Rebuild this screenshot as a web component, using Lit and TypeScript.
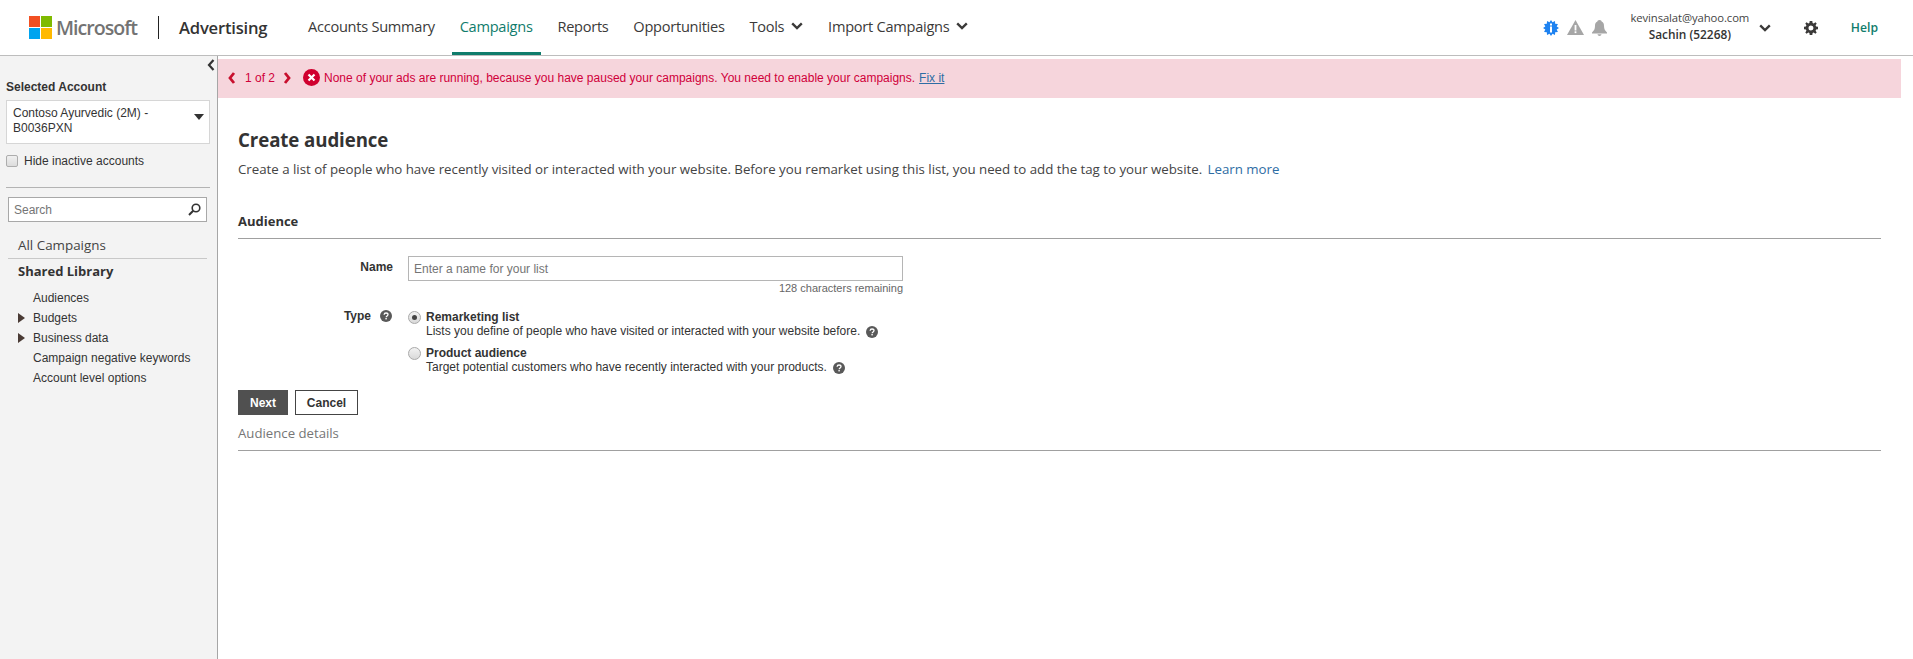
import { LitElement, html, css } from "lit";
import { customElement } from "lit/decorators.js";

const chevDown = html`<svg class="chev" width="12" height="8" viewBox="0 0 12 8"><path d="M1.200 1.400 6 6l4.800-4.600" fill="none" stroke="#3b3a39" stroke-width="2.400"/></svg>`;
const help = html`<svg class="help" width="12" height="12" viewBox="0 0 12 12"><circle cx="6" cy="6" r="6" fill="#595959"/><path d="M4.100 4.700C4.200 3.500 5 3 6 3c1.200 0 2 .7 2 1.600 0 1.400-1.700 1.400-1.800 2.600" fill="none" stroke="#fff" stroke-width="1.300"/><rect x="5.400" y="8" width="1.400" height="1.400" fill="#fff"/></svg>`;
const side = (d: string) => html`<svg width="8" height="12" viewBox="0 0 8 12"><path d="${d}" fill="none" stroke="#c8102e" stroke-width="2.800"/></svg>`;
const burstPath = (() => {
  const pts: string[] = [];
  const n = 12;
  for (let i = 0; i < n * 2; i++) {
    const r = i % 2 ? 5.9 : 8;
    const a = (Math.PI * i) / n;
    pts.push(`${(8 + r * Math.sin(a)).toFixed(2)},${(8 - r * Math.cos(a)).toFixed(2)}`);
  }
  return pts.join(" ");
})();

@customElement("app-root")
export class AppRoot extends LitElement {
  static styles = css`
    :host { display: flex; flex-direction: column; height: 100vh; min-height: 659px; background: #fff; color: #333; font-family: "Liberation Sans", Arial, sans-serif; font-size: 12px; overflow: hidden; }
    header { height: 55px; flex: none; display: flex; align-items: center; border-bottom: 1px solid #bdbdbd; padding-left: 29px; box-sizing: content-box; }
    .logo { display: grid; grid-template-columns: 11px 11px; grid-template-rows: 11px 11px; gap: 1px; flex: none; }
    .ms { font: 600 19.6px "Open Sans", sans-serif; color: #737373; margin-left: 4px; letter-spacing: -1px; width: 82px; }
    .sep { width: 1px; height: 23px; background: #222; margin: 0 20px 0 20px; }
    .adv { font: 600 16.6px "Open Sans", sans-serif; color: #333; width: 90px; letter-spacing: -.2px; }
    nav { display: flex; margin-left: 31px; height: 55px; }
    nav a { font: 400 14.6px "Open Sans", sans-serif; letter-spacing: -.27px; color: #3b3a39; display: flex; align-items: center; gap: 7px; padding: 0 8px 0 8px; margin-right: 8.800px; border-bottom: 3px solid transparent; box-sizing: border-box; height: 55px; }
    nav a.on { color: #107c6c; border-bottom-color: #107c6c; }
    .right { margin-left: auto; display: flex; align-items: center; height: 55px; }
    .icons { display: flex; gap: 8px; align-items: center; margin-right: 22px; }
    .user { width: 122px; text-align: center; font-family: "Open Sans", sans-serif; line-height: 16px; margin-top: -3px; }
    .user .e { font-size: 11.3px; color: #444; letter-spacing: -.1px; }
    .user .n { font-size: 11.9px; font-weight: 600; color: #333; }
    .user-chev { margin: 0 33px 0 8px; display: flex; }
    .gear { margin-right: 33px; display: flex; }
    .helplink { font: 600 12.2px "Open Sans", sans-serif; color: #107c6c; margin-right: 35px; }
    .body { flex: 1; display: flex; min-height: 0; }
    aside { width: 218px; flex: none; background: #f3f3f3; border-right: 1px solid #a6a6a6; box-sizing: border-box; padding: 0 7px 0 6px; position: relative; }
    .collapse { position: absolute; right: 2px; top: 3px; }
    .sa { font-weight: 700; margin-top: 24px; line-height: 14px; font-size: 12px; color: #333; }
    .sel { height: 44px; margin-top: 6px; box-sizing: border-box; background: #fff; border: 1px solid #d6d6d6; padding: 5px 6px; line-height: 15px; position: relative; color: #333; }
    .sel i { position: absolute; right: 5px; top: 13px; width: 0; height: 0; border: 5px solid transparent; border-top: 6px solid #333; border-bottom: 0; }
    .hide { display: flex; align-items: center; gap: 6px; margin-top: 10px; height: 13px; color: #333; }
    .cb { width: 12px; height: 12px; box-sizing: border-box; border: 1px solid #adadad; border-radius: 2px; background: linear-gradient(#f0f0f0, #dcdcdc); }
    .hr { height: 1px; background: #b3b3b3; margin-top: 20px; }
    .search { margin: 9px 3px 0 2px; height: 25px; box-sizing: border-box; background: #fff; border: 1px solid #a8a8a8; display: flex; align-items: center; justify-content: space-between; padding: 0 5px 0 5px; color: #757575; }
    .all { font: 400 13.4px "Open Sans", sans-serif; color: #444; margin: 14px 3px 0 2px; padding: 0 0 3px 10px; border-bottom: 1px solid #c8c8c8; line-height: 19px; }
    .lib { font: 700 13px "Open Sans", sans-serif; margin: 2px 0 0 12px; line-height: 20px; color: #333; }
    .tree { margin: 7px 0 0 12px; }
    .tree div { height: 20px; line-height: 20px; padding-left: 15px; position: relative; color: #333; }
    .tree div.arrow::before { content: ""; position: absolute; left: 0; top: 5px; border: 5px solid transparent; border-left: 7px solid #4a3b35; border-right: 0; }
    main { flex: 1; min-width: 0; padding: 3px 12px 0 0; }
    .banner { height: 39px; background: #f6d5dc; display: flex; align-items: center; color: #d0003a; padding: 0 0 2px 10px; box-sizing: border-box; }
    .banner .pg { margin: 0 8px 0 9px; }
    .banner .err { margin: 0 4px 0 12px; flex: none; }
    .banner a { color: #2e6da4; text-decoration: underline; margin-left: 4px; }
    .content { padding: 0 20px 0 20px; }
    h1 { font: 700 18.7px "Open Sans", sans-serif; color: #333; margin: 28px 0 0; line-height: 28px; letter-spacing: -.1px; }
    .desc { font: 400 13.3px "Open Sans", sans-serif; color: #444; margin-top: 5px; line-height: 20px; letter-spacing: -.02px; }
    .desc a { color: #2e6da4; margin-left: 2px; }
    h2 { font: 700 13px "Open Sans", sans-serif; color: #333; margin: 33px 0 0; line-height: 18px; padding-bottom: 8px; border-bottom: 1px solid #a0a0a0; }
    .grid { display: grid; grid-template-columns: 155px 1fr; column-gap: 15px; margin-top: 17px; }
    .lbl { text-align: right; font-weight: 700; line-height: 14px; padding-top: 4px; color: #333; display: flex; justify-content: flex-end; align-items: center; gap: 9px; height: 14px; }
    .lbl .help { margin-right: 1px; }
    .inp { width: 495px; height: 25px; box-sizing: border-box; border: 1px solid #b5b5b5; padding: 0 5px; display: flex; align-items: center; color: #757575; }
    .cnt { width: 495px; text-align: right; font-size: 11px; color: #666; line-height: 13px; margin-top: 1px; }
    .tl { margin-top: 10px; }
    .opts { margin-top: 15px; }
    .opt { display: flex; gap: 5px; margin-bottom: 7px; }
    .radio { width: 13px; height: 13px; box-sizing: border-box; border-radius: 50%; border: 1px solid #a9a9a9; background: linear-gradient(#f2f2f2, #d9d9d9); margin-top: 1px; flex: none; display: flex; align-items: center; justify-content: center; }
    .radio.on::after { content: ""; width: 5px; height: 5px; border-radius: 50%; background: #444; }
    .opt b { display: block; line-height: 14px; color: #333; }
    .opt span.t { display: flex; align-items: center; gap: 6px; line-height: 15px; color: #333; }
    .btns { display: flex; gap: 7px; margin-top: 8px; }
    button { height: 25px; font: 700 12px "Liberation Sans", sans-serif; box-sizing: border-box; padding: 0; }
    .next { width: 50px; background: #505050; color: #fff; border: 0; }
    .cancel { width: 63px; background: #fff; color: #333; border: 1px solid #444; }
    .details { font: 400 13.2px "Open Sans", sans-serif; color: #767676; margin-top: 8px; line-height: 20px; padding-bottom: 7px; border-bottom: 1px solid #a0a0a0; }
  `;

  render() {
    return html`
      <header>
        <div class="logo">
          <span style="background:#f25022"></span><span style="background:#7fba00"></span>
          <span style="background:#00a4ef"></span><span style="background:#ffb900"></span>
        </div>
        <span class="ms">Microsoft</span>
        <span class="sep"></span>
        <span class="adv">Advertising</span>
        <nav>
          <a>Accounts Summary</a>
          <a class="on">Campaigns</a>
          <a>Reports</a>
          <a>Opportunities</a>
          <a>Tools ${chevDown}</a>
          <a>Import Campaigns ${chevDown}</a>
        </nav>
        <div class="right">
          <div class="icons">
            <svg width="16" height="16" viewBox="0 0 16 16"><polygon fill="#1e82f0" points="${burstPath}"/><rect x="7" y="3.500" width="2" height="2" fill="#fff"/><rect x="7" y="6.500" width="2" height="6" fill="#fff"/></svg>
            <svg width="17" height="15" viewBox="0 0 17 15"><path fill="#a6a6a6" d="M8.500 0 17 15H0z"/><rect x="7.600" y="5" width="1.800" height="5.500" fill="#fff"/><rect x="7.600" y="11.300" width="1.800" height="1.800" fill="#fff"/></svg>
            <svg width="15" height="16" viewBox="0 0 15 16"><path fill="#a6a6a6" d="M7.500 0C9 0 9.600 1 9.600 1.600 11.500 2.300 12 4 12 6c0 3 1 4.500 3 6.500v1H0v-1C2 10.500 3 9 3 6c0-2 .5-3.700 2.400-4.400C5.400 1 6 0 7.500 0zM5.500 14.300h4C9.300 15.300 8.500 16 7.500 16s-1.800-.7-2-1.700z"/></svg>
          </div>
          <div class="user"><div class="e">kevinsalat@yahoo.com</div><div class="n">Sachin (52268)</div></div>
          <span class="user-chev">${chevDown}</span>
          <span class="gear"><svg width="14" height="14" viewBox="0 0 14 14"><path fill="#3b3a39" fill-rule="evenodd" d="M5.700 0h2.600l.3 1.900 1.100.5L11.400 1.300l1.300 1.300-1.100 1.700.5 1.100 1.900.3v2.600l-1.900.3-.5 1.100 1.100 1.700-1.300 1.300-1.700-1.100-1.100.5L8.300 14H5.700l-.3-1.900-1.100-.5-1.700 1.100-1.300-1.300 1.100-1.700-.5-1.100L0 8.300V5.700l1.900-.3.500-1.100L1.300 2.600l1.300-1.300 1.700 1.100 1.100-.5zM7 4.500a2.500 2.500 0 1 0 0 5 2.500 2.500 0 0 0 0-5z"/></svg></span>
          <span class="helplink">Help</span>
        </div>
      </header>
      <div class="body">
        <aside>
          <svg class="collapse" width="8" height="12" viewBox="0 0 8 12"><path d="M6.500 1 2 6l4.500 5" fill="none" stroke="#333" stroke-width="2.200"/></svg>
          <div class="sa">Selected Account</div>
          <div class="sel">Contoso Ayurvedic (2M) -<br />B0036PXN<i></i></div>
          <div class="hide"><span class="cb"></span>Hide inactive accounts</div>
          <div class="hr"></div>
          <div class="search">Search
            <svg width="13" height="13" viewBox="0 0 13 13"><circle cx="8" cy="5" r="3.800" fill="none" stroke="#333" stroke-width="1.600"/><path d="M5.200 7.800 1 12" stroke="#333" stroke-width="2"/></svg>
          </div>
          <div class="all">All Campaigns</div>
          <div class="lib">Shared Library</div>
          <div class="tree">
            <div>Audiences</div>
            <div class="arrow">Budgets</div>
            <div class="arrow">Business data</div>
            <div>Campaign negative keywords</div>
            <div>Account level options</div>
          </div>
        </aside>
        <main>
          <div class="banner">
            ${side("M6 1 2 6l4 5")}
            <span class="pg">1 of 2</span>
            ${side("M2 1l4 5-4 5")}
            <svg class="err" width="17" height="17" viewBox="0 0 17 17"><circle cx="8.500" cy="8.500" r="8.500" fill="#d0002f"/><path d="M5.500 5.500l6 6m0-6-6 6" stroke="#fff" stroke-width="2.200"/></svg>
            <span>None of your ads are running, because you have paused your campaigns. You need to enable your campaigns.</span>
            <a>Fix it</a>
          </div>
          <div class="content">
            <h1>Create audience</h1>
            <div class="desc">Create a list of people who have recently visited or interacted with your website. Before you remarket using this list, you need to add the tag to your website. <a>Learn more</a></div>
            <h2>Audience</h2>
            <div class="grid">
              <div class="lbl">Name</div>
              <div>
                <div class="inp">Enter a name for your list</div>
                <div class="cnt">128 characters remaining</div>
              </div>
              <div class="lbl tl">Type ${help}</div>
              <div class="opts">
                <div class="opt">
                  <span class="radio on"></span>
                  <div><b>Remarketing list</b><span class="t">Lists you define of people who have visited or interacted with your website before. ${help}</span></div>
                </div>
                <div class="opt">
                  <span class="radio"></span>
                  <div><b>Product audience</b><span class="t">Target potential customers who have recently interacted with your products. ${help}</span></div>
                </div>
              </div>
            </div>
            <div class="btns"><button class="next">Next</button><button class="cancel">Cancel</button></div>
            <div class="details">Audience details</div>
          </div>
        </main>
      </div>
    `;
  }
}
